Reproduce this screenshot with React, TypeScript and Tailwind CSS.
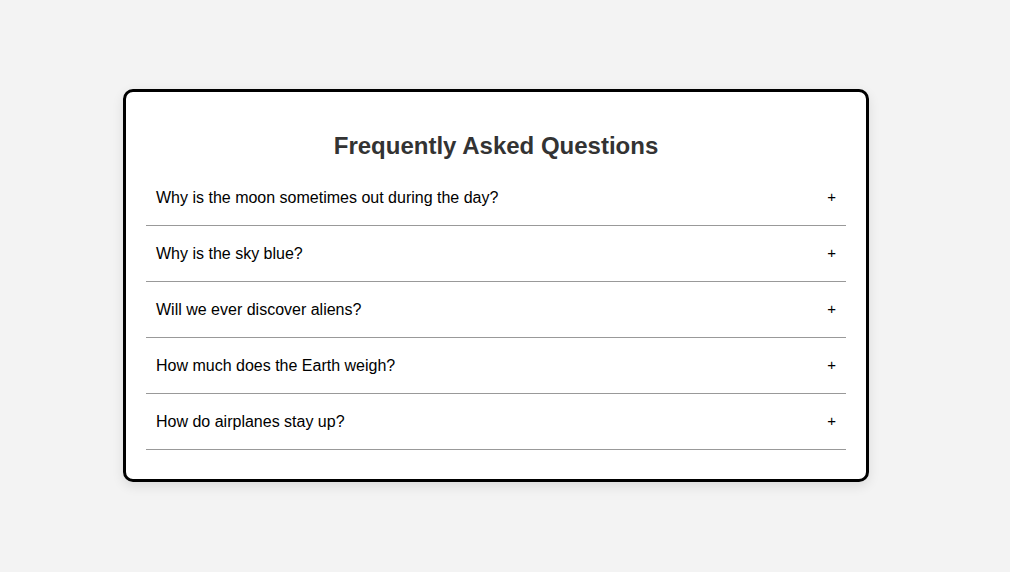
const questions = [
  "Why is the moon sometimes out during the day?",
  "Why is the sky blue?",
  "Will we ever discover aliens?",
  "How much does the Earth weigh?",
  "How do airplanes stay up?",
];

export default function App() {
  return (
    <div className="min-h-[572px] bg-[#f3f3f3] pt-[89px] font-['Liberation_Sans',Arial,sans-serif]">
      <div className="ml-[123px] w-[746px] rounded-[10px] border-[3px] border-black bg-white px-[20px] pt-[40px] pb-[29px] shadow-[0_4px_12px_rgba(0,0,0,0.1)]">
        <h2 className="mb-[10px] text-center text-[24px] leading-[28px] font-bold text-[#333]">
          Frequently Asked Questions
        </h2>
        <div>
          {questions.map((q) => (
            <div
              key={q}
              className="flex h-[56px] items-center justify-between border-b border-[#999] px-[10px] text-[16px] text-black"
            >
              <span>{q}</span>
              <span className="text-[15px]">+</span>
            </div>
          ))}
        </div>
      </div>
    </div>
  );
}
